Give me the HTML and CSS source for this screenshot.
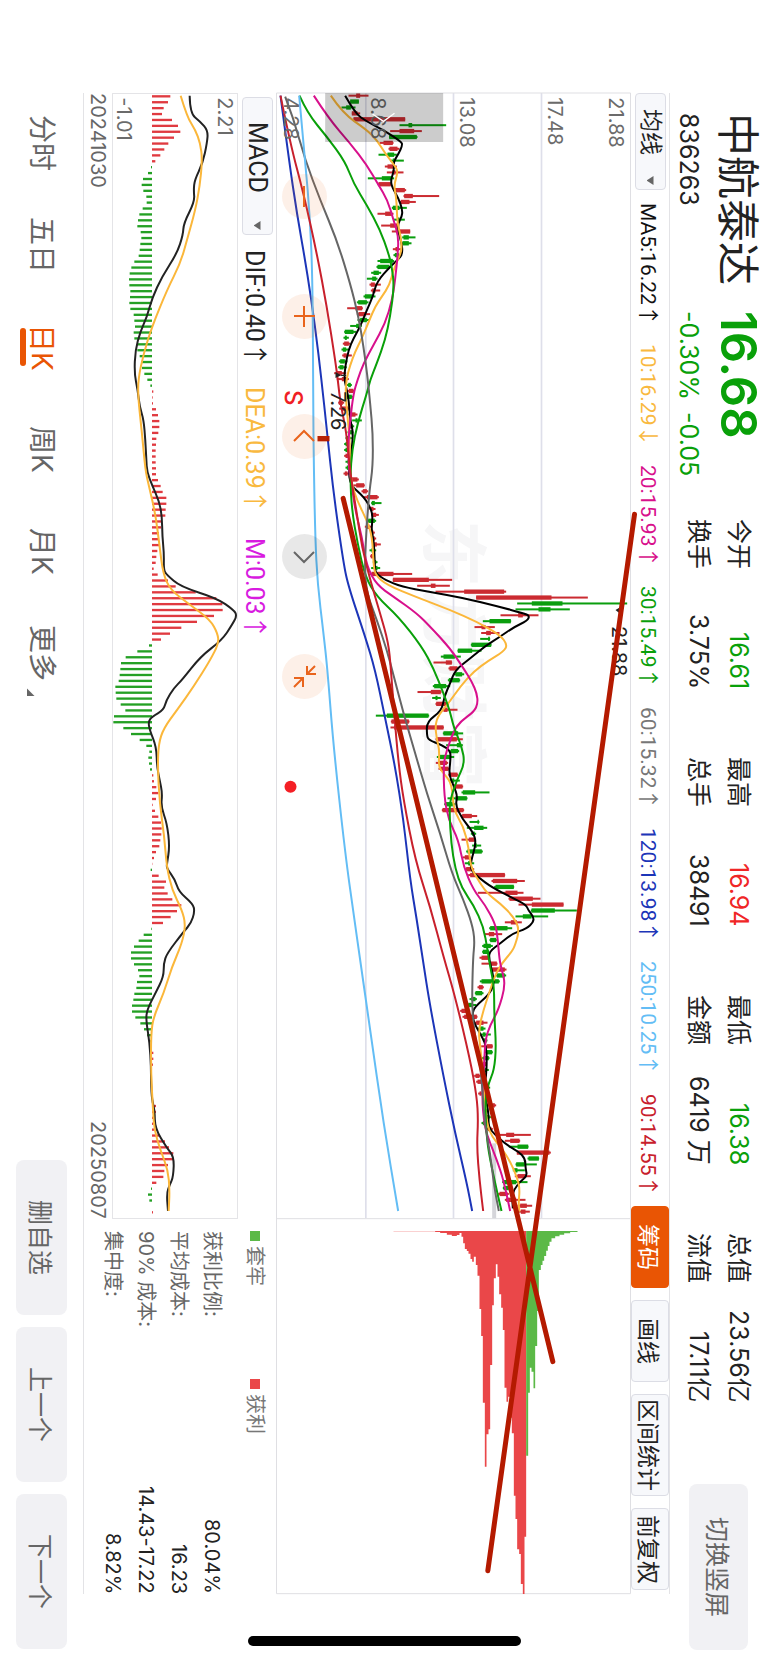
FILE: index.html
```html
<!DOCTYPE html>
<html lang="zh-CN">
<head>
  <meta charset="UTF-8">
  <meta name="viewport" content="width=device-width, initial-scale=1.0">
  <title>中航泰达 836263</title>
  <link rel="stylesheet" href="styles.css">
</head>
<body>
  <header class="top">
    <div class="ident">
      <h1>中航泰达</h1>
      <strong class="price down">16.68</strong>
      <span class="code">836263</span>
      <span class="change down"><span>-0.30%</span><span>-0.05</span></span>
    </div>
    <dl class="stats">
      <div><dt>今开</dt><dd class="down">16.61</dd></div>
      <div><dt>最高</dt><dd class="up">16.94</dd></div>
      <div><dt>最低</dt><dd class="down">16.38</dd></div>
      <div><dt>总值</dt><dd>23.56亿</dd></div>
      <div><dt>换手</dt><dd>3.75%</dd></div>
      <div><dt>总手</dt><dd>38491</dd></div>
      <div><dt>金额</dt><dd>6419 万</dd></div>
      <div><dt>流值</dt><dd>17.11亿</dd></div>
    </dl>
    <button class="btn rotate">切换竖屏</button>
  </header>

  <main>
    <div class="toolbar">
      <div class="pick pick-ma">
        <select aria-label="主图指标"><option>均线</option></select>
      </div>
      <div class="ma-list">
        <span class="ma5">MA5:16.22↑</span>
        <span class="ma10">10:16.29↓</span>
        <span class="ma20">20:15.93↑</span>
        <span class="ma30">30:15.49↑</span>
        <span class="ma60">60:15.32↑</span>
        <span class="ma120">120:13.98↑</span>
        <span class="ma250">250:10.25↑</span>
        <span class="ma90">90:14.55↑</span>
      </div>
      <div class="tools">
        <button class="tool active">筹码</button>
        <button class="tool">画线</button>
        <button class="tool wide">区间统计</button>
        <button class="tool">前复权</button>
      </div>
    </div>

    <div class="kline">
      <svg id="kline" viewBox="18 39 1064 4503">
        <text class="watermark" transform="translate(475 1320) rotate(90)">东方财富</text>
        <path class="grid" d="M287 39V3415M550 39V3415M814 39V3415"/>
        <path class="frame" d="M19 39H1081V4541H19ZM19 3416H1081"/>
        <rect x="666" y="3190" width="12" height="225" fill="#d5d5da"/>
        <g id="candles"></g>
        <g id="maLines"></g>
        <g id="chips"></g>
        <g class="axis">
          <text transform="translate(1016 52) rotate(90)">21.88</text>
          <text transform="translate(834 52) rotate(90)">17.48</text>
          <text transform="translate(568 52) rotate(90)">13.08</text>
          <text transform="translate(303 52) rotate(90)">8.68</text>
          <text transform="translate(41 52) rotate(90)">4.28</text>
        </g>
        <rect x="165" y="39" width="354" height="147" fill="#000" opacity=".2"/>
        <path d="M307 102L340 124L373 100" fill="none" stroke="#fff" stroke-width="4"/>
        <g class="mark">
          <path d="M196 876L213 886L196 894Z M213 884H228V888H213Z"/>
          <text transform="translate(181 934) rotate(90)">7.26</text>
          <path d="M1036 1590L1050 1582L1046 1598Z"/>
          <text transform="translate(1024 1638) rotate(90)">21.88</text>
        </g>
        <text class="sell" transform="translate(43 930) rotate(90)">S</text>
        <circle cx="61" cy="2120" r="18" fill="#f41f25"/>
        <rect x="142" y="1068" width="36" height="16" fill="#b41a00"/>
        <path class="trend" d="M1093 1303L653 4472M219 1255L848 3845"/>
      </svg>
      <div class="float-btns">
        <button class="round" aria-label="缩小"><svg viewBox="0 0 45 45"><path d="M22 12V33"/></svg></button>
        <button class="round" aria-label="放大"><svg viewBox="0 0 45 45"><path d="M22 12V33M12 22H33"/></svg></button>
        <button class="round" aria-label="左移"><svg viewBox="0 0 45 45"><path d="M12 27L22 17L32 27"/></svg></button>
        <button class="round off" aria-label="右移"><svg viewBox="0 0 45 45"><path d="M12 18L22 28L32 18"/></svg></button>
        <button class="round" aria-label="收起"><svg viewBox="0 0 45 45"><path d="M33 12L25 20M25 12V20H34M12 33L21 24M12 24H21V33"/></svg></button>
      </div>
    </div>

    <div class="lower">
      <section class="macd">
        <div class="macd-head">
          <div class="pick pick-macd">
            <select aria-label="副图指标"><option>MACD</option></select>
          </div>
          <span class="dif">DIF:0.40↑</span>
          <span class="dea">DEA:0.39↑</span>
          <span class="m">M:0.03↑</span>
        </div>
        <svg id="macd" viewBox="335 39 378 3378">
          <path class="frame" d="M336 40H712V3416H336Z"/>
          <g id="macdBars"></g>
          <g id="macdLines"></g>
          <g class="axis">
            <text transform="translate(653 52) rotate(90)">2.21</text>
            <text transform="translate(350 52) rotate(90)">-1.01</text>
          </g>
        </svg>
        <div class="dates"><span>20241030</span><span>20250807</span></div>
      </section>
      <section class="chip-info">
        <div class="legend">
          <span class="green">套牢</span>
          <span class="red">获利</span>
        </div>
        <dl>
          <div><dt>获利比例:</dt><dd>80.04%</dd></div>
          <div><dt>平均成本:</dt><dd>16.23</dd></div>
          <div><dt>90% 成本:</dt><dd>14.43-17.22</dd></div>
          <div><dt>集中度:</dt><dd>8.82%</dd></div>
        </dl>
      </section>
    </div>
  </main>

  <footer>
    <nav>
      <a href="#">分时</a>
      <a href="#">五日</a>
      <a href="#" class="on">日K</a>
      <a href="#">周K</a>
      <a href="#">月K</a>
      <a href="#" class="more">更多</a>
    </nav>
    <div class="actions">
      <button class="btn">删自选</button>
      <button class="btn">上一个</button>
      <button class="btn">下一个</button>
    </div>
  </footer>
  <div class="home-bar"></div>

  <script src="chart.js"></script>
</body>
</html>
```
FILE: styles.css
```css
* {
  box-sizing: border-box;
}

/* landscape screen: lines run top to bottom, rows stack right to left */
html {
  writing-mode: vertical-rl;
  text-orientation: sideways;
  height: 100%;
}

body {
  margin: 0;
  height: 100%;
  min-width: 100vw;
  display: flex;
  flex-direction: column;
  position: relative;
  background: #fff;
  color: #222;
  font-family: Inter, "Noto Sans CJK SC", sans-serif;
  font-size: 20px;
}

h1, dl, dd {
  margin: 0;
}

button, select {
  writing-mode: vertical-rl;
  text-orientation: sideways;
  font-family: inherit;
  padding: 0;
  margin: 0;
  cursor: pointer;
}

a {
  color: inherit;
  text-decoration: none;
}

.up { color: #f02626; }
.down { color: #09a009; }

.btn {
  border: none;
  border-radius: 8px;
  background: #f1f1f4;
  color: #666;
  font-size: 25px;
}

/* header */
.top {
  display: flex;
  align-items: flex-start;
  block-size: 98px;
  padding-inline: 113px 13px;
  white-space: nowrap;
}

.ident {
  display: grid;
  grid-template-columns: 172px auto;
  column-gap: 26px;
  row-gap: 13px;
  inline-size: 406px;
  flex: none;
  justify-content: start;
  padding-block-start: 9px;
  font-size: 25px;
  line-height: 30px;
}

.ident h1 {
  font-size: 43px;
  font-weight: 400;
  line-height: 42px;
}

.price {
  font-size: 49px;
  font-weight: 600;
  line-height: 42px;
}

.change {
  display: flex;
  gap: 12px;
}

.stats {
  display: grid;
  grid-template-columns: repeat(4, 170px);
  column-gap: 68px;
  padding-block-start: 9px;
  font-size: 25px;
  line-height: 40px;
}

.stats div {
  display: flex;
  justify-content: space-between;
}

.rotate {
  inline-size: 166px;
  block-size: 59px;
  margin-inline-start: auto;
  margin-block-start: 20px;
}

main {
  margin-inline: 93px 69px;
  border-block-end: 1px solid #e3e3e6;
}

/* indicator bar */
.toolbar {
  display: flex;
  align-items: center;
  block-size: 39px;
  border-block-start: 1px solid #e3e3e6;
}

.pick {
  position: relative;
  flex: none;
  block-size: 31px;
}

.pick::after {
  content: "";
  position: absolute;
  inset-inline-end: 5px;
  inset-block-start: 12px;
  inline-size: 9px;
  block-size: 7px;
  background: #666;
  clip-path: polygon(100% 0, 100% 100%, 0 50%);
  pointer-events: none;
}

.pick select {
  appearance: none;
  inline-size: 100%;
  block-size: 100%;
  border: 1px solid #dcdde5;
  border-radius: 4px;
  background: #f7f8fb;
  color: #222;
  font-size: 23px;
  line-height: 29px;
}

.pick-ma {
  inline-size: 97px;
}

.pick-ma select {
  padding-inline-start: 15px;
}

.pick-macd {
  inline-size: 138px;
}

.pick-macd select {
  font-family: Roboto, sans-serif;
  font-size: 25px;
  padding-inline-start: 24px;
}

.ma-list {
  flex: 1;
  display: flex;
  justify-content: space-between;
  padding-inline: 13px 10px;
  font-family: Roboto, "Noto Sans CJK SC", sans-serif;
  font-size: 21px;
  white-space: nowrap;
}

.ma5 { color: #111; }
.ma10 { color: #f9b93f; }
.ma20 { color: #d8108c; }
.ma30 { color: #0ba00b; }
.ma60 { color: #777; }
.ma120 { color: #1c35b8; }
.ma250 { color: #63bdf5; }
.ma90 { color: #c8202c; }

.tools {
  display: flex;
  gap: 12px;
  block-size: 38px;
  padding-inline-end: 4px;
}

.tool {
  inline-size: 82px;
  border: 1px solid #dcdde5;
  border-radius: 4px;
  background: #f7f8fb;
  color: #222;
  font-size: 23px;
  white-space: nowrap;
}

.tool.wide {
  inline-size: 102px;
}

.tool.active {
  border-color: #e95504;
  background: #e95504;
  color: #fff;
}

/* main chart */
.kline {
  position: relative;
}

svg {
  display: block;
  writing-mode: horizontal-tb;
  text-orientation: mixed;
}

#kline {
  width: 355px;
  height: 100%;
  overflow: visible;
}

.frame {
  fill: none;
  stroke: #dfdfe3;
  stroke-width: 3;
}

.grid {
  fill: none;
  stroke: #dedfea;
  stroke-width: 5;
}

.axis text {
  font-size: 60px;
  fill: #6b6b6b;
}

.watermark {
  font-size: 201px;
  font-weight: 700;
  fill: #f6f6f7;
}

.mark {
  fill: #222;
  font-size: 60px;
}

.sell {
  fill: #f01f25;
  font-size: 72px;
  font-weight: 500;
}

.trend {
  fill: none;
  stroke: #b41a00;
  stroke-width: 15;
  stroke-linecap: round;
}

.line {
  fill: none;
  stroke-width: 6;
  stroke-linejoin: round;
}

.float-btns {
  position: absolute;
  inset-inline-start: 81px;
  inset-block-end: 6px;
  display: flex;
  gap: 75px;
}

.round {
  inline-size: 45px;
  block-size: 45px;
  border: none;
  border-radius: 50%;
  background: rgba(240, 110, 30, 0.1);
}

.round svg {
  width: 45px;
  height: 45px;
  fill: none;
  stroke: #e9641c;
  stroke-width: 2;
}

.round.off {
  background: rgba(0, 0, 0, 0.09);
}

.round.off svg {
  stroke: #666;
}

/* macd and chip figures */
.lower {
  display: flex;
}

.macd {
  flex: 3;
}

.macd-head {
  display: flex;
  align-items: center;
  block-size: 38px;
  padding-inline-start: 4px;
  font-family: Roboto, "Noto Sans CJK SC", sans-serif;
  font-size: 25px;
  white-space: nowrap;
}

.macd-head .dif {
  margin-inline-start: 15px;
}

.macd-head .dea {
  margin-inline-start: 20px;
}

.macd-head .m {
  margin-inline-start: 24px;
}

.dif { color: #222; }
.dea { color: #f9b93f; }
.m { color: #d81be0; }

#macd {
  width: 126px;
  height: 100%;
}

.dates {
  display: flex;
  justify-content: space-between;
  line-height: 28px;
  color: #666;
}

.chip-info {
  flex: 1;
  padding-inline-start: 12px;
  padding-block-start: 2px;
}

.legend {
  display: flex;
  block-size: 46px;
  line-height: 38px;
  color: #777;
}

.legend span {
  display: flex;
  align-items: center;
  block-size: 38px;
  gap: 5px;
  inline-size: 148px;
}

.legend span::before {
  content: "";
  inline-size: 10px;
  block-size: 10px;
  background: #5bb947;
}

.legend .red::before {
  background: #ea4749;
}

.chip-info dl div {
  display: flex;
  justify-content: space-between;
  line-height: 33px;
}

.chip-info dt {
  color: #666;
}

/* period tabs */
footer {
  flex: 1;
  display: flex;
  justify-content: space-between;
  align-items: center;
  padding-inline: 92px 14px;
}

nav {
  display: flex;
  font-size: 28px;
  line-height: 34px;
  color: #666;
}

nav a {
  position: relative;
  inline-size: 102px;
  text-align: center;
}

nav .on {
  color: #e95504;
}

nav .on::after {
  content: "";
  position: absolute;
  inset-inline: 32px;
  inset-block-end: -5px;
  block-size: 6px;
  border-radius: 3px;
  background: #e95504;
}

nav .more::after {
  content: "";
  position: absolute;
  inset-inline-end: 8px;
  inset-block-end: 2px;
  inline-size: 8px;
  block-size: 8px;
  background: #666;
  clip-path: polygon(0 0, 0 100%, 100% 100%);
}

.actions {
  display: flex;
  gap: 12px;
}

.actions .btn {
  inline-size: 155px;
  block-size: 51px;
}

.home-bar {
  position: absolute;
  bottom: 17px;
  left: 50%;
  width: 273px;
  height: 10px;
  margin-left: -136px;
  border-radius: 5px;
  background: #000;
}
```
FILE: chart.js
```javascript
// Chart units: 3 per pixel. Time runs down, value runs to the right.
const STEP = 17.714;
const NS = "http://www.w3.org/2000/svg";

// low high bodyStart bodyEnd colour
const candles = `235 295 258 270 r|240 266 240 266 g|214 256 228 242 g|245 270 245 262 r|250 405 250 405 r
388 528 415 426 g|360 455 388 432 r|357 442 357 440 g|328 370 340 368 r|355 388 358 382 r
325 380 352 372 g|360 401 368 374 g|344 380 352 372 r|350 400 366 376 r|293 372 335 365 g
322 365 325 362 r|370 408 374 404 r|400 507 402 428 r|388 437 392 418 r|365 410 368 388 g
322 370 345 366 r|370 404 382 388 g|333 385 360 384 r|365 420 382 420 r|396 436 400 416 g
394 424 397 416 g|368 392 376 384 r|370 392 374 386 g|322 372 330 368 g|319 362 322 358 g
303 333 310 326 g|290 322 306 318 g|298 332 302 314 r|302 330 306 316 r|280 316 284 306 g
260 295 264 290 g|231 278 256 276 r|260 300 265 286 r|262 298 270 290 g|240 275 258 268 g
222 258 224 250 g|220 236 224 230 g|218 240 222 236 r|214 236 218 228 g|216 245 220 230 r
206 232 210 224 g|204 230 208 220 g|192 228 200 215 r|200 236 215 230 r|230 245 234 242 g
232 254 236 250 r|226 250 230 245 g|204 222 206 218 r|207 240 215 235 r|235 262 240 256 r
246 275 256 262 g|236 252 238 248 g|232 250 238 246 g|226 245 230 240 g|222 240 226 234 g
222 236 226 234 g|222 240 226 236 r|226 244 232 240 g|226 238 230 236 g|220 236 224 232 r
238 266 242 262 r|250 284 258 282 r|274 294 278 290 r|280 326 290 322 r|303 334 305 314 g
298 316 302 310 r|304 326 308 318 r|290 318 294 314 g|284 304 288 298 r|300 314 302 310 r
304 318 306 314 r|308 332 312 320 r|298 318 304 312 g|300 314 302 308 r|308 322 312 318 g
303 330 314 322 g|300 426 304 370 r|368 546 368 476 r|441 539 482 496 r|496 708 582 702 r
618 953 618 844 r|741 1071 785 877 g|736 899 805 841 g|691 805 744 758 r|638 723 658 722 g
613 674 634 646 r|633 688 648 662 r|630 660 654 659 g|602 664 604 663 g|562 634 563 606 g
512 572 520 554 g|490 546 527 545 r|535 566 538 562 r|550 582 556 576 g|533 570 536 568 g
488 540 492 528 g|442 514 482 512 r|486 512 496 502 g|496 536 498 530 r|516 562 520 532 r
317 477 350 475 g|362 418 364 416 r|361 521 372 520 r|518 579 520 564 g|496 578 498 560 r
528 578 560 572 g|540 567 542 564 g|500 552 508 542 g|497 534 506 530 r|505 540 510 535 r
534 564 536 562 r|536 569 546 552 g|548 579 552 577 r|574 658 578 615 g|532 592 556 590 g
522 556 526 548 g|515 582 517 580 r|572 621 576 605 r|598 628 622 626 g|590 651 612 640 g
602 618 606 614 g|574 616 596 614 r|606 633 612 620 g|588 638 592 635 g|578 602 584 598 r
584 612 594 602 g|586 612 588 608 r|594 705 600 704 r|664 764 668 741 r|672 732 676 731 g
623 760 706 742 r|715 811 718 788 r|745 880 785 880 r|782 920 784 854 g|736 834 758 784 g
704 755 722 740 r|657 726 660 712 g|642 696 656 672 r|658 680 660 678 g|636 668 640 662 g
636 658 638 656 g|628 656 634 654 r|634 682 662 680 r|663 709 666 704 r|676 708 680 704 g
629 689 634 686 g|622 641 626 638 r|614 640 616 636 g|598 620 604 616 g|590 618 594 606 g
570 600 574 588 r|577 622 582 620 r|614 652 618 640 r|622 646 630 640 g|632 662 638 646 g
638 652 642 650 g|633 668 650 667 r|644 668 650 666 g|632 658 640 656 g|630 650 634 648 r
640 656 644 650 g|612 632 616 628 r|618 640 622 634 r|640 660 644 654 g|624 638 628 634 r
640 658 644 652 g|648 678 666 674 r|640 652 644 650 g|644 662 648 658 g|634 652 638 648 g
648 668 652 664 r|684 782 708 732 r|704 750 720 748 r|716 775 742 774 g|740 842 740 838 r
772 807 775 806 g|736 800 738 764 g|728 764 732 742 g|734 782 742 766 r|696 772 700 738 g
698 720 700 716 g|684 716 688 712 r|704 766 708 738 r|742 786 750 770 r|744 779 752 766 r`.split(/[|\n]/);

const maLines = {
  "#000": "225,47 255,100 290,125 340,150 393,185 397,195 385,222 370,245 372,270 362,300 365,320 385,355 397,390 395,410 383,432 385,460 395,490 397,520 388,535 360,560 320,605 308,650 290,690 270,740 250,775 235,810 225,860 222,900 235,950 240,1020 248,1050 247,1090 238,1150 236,1190 245,1218 258,1230 282,1253 296,1275 307,1300 306,1330 304,1350 312,1390 314,1470 320,1482 345,1500 395,1520 475,1535 585,1555 680,1578 760,1600 778,1607 772,1622 730,1642 690,1670 645,1698 600,1735 555,1770 540,1810 522,1850 515,1892 470,1925 470,1965 475,1980 515,1995 541,2012 541,2040 536,2085 552,2120 562,2150 556,2175 575,2215 610,2258 618,2290 602,2345 602,2370 625,2392 665,2422 730,2455 768,2475 774,2490 790,2510 790,2526 770,2545 725,2562 690,2590 657,2615 657,2640 668,2680 672,2715 655,2745 615,2780 606,2800 612,2830 638,2875 648,2900 650,2940 648,2990 640,3030 650,3070 655,3100 655,3140 670,3160 710,3195 745,3215 765,3235 766,3265 771,3288 750,3305 732,3328 726,3350 728,3385",
  "#fbb73a": "182,47 218,100 290,150 320,180 345,220 372,255 384,275 371,315 378,350 380,390 382,430 392,470 395,510 385,535 370,570 358,615 335,650 315,680 300,715 275,775 255,815 240,855 228,900 226,950 240,1090 238,1150 244,1210 262,1265 290,1320 306,1370 310,1450 315,1485 350,1515 440,1552 540,1590 620,1625 690,1665 712,1695 700,1715 655,1742 610,1775 570,1820 535,1870 505,1905 495,1935 500,1980 508,2010 505,2060 520,2080 545,2110 550,2190 580,2240 595,2300 602,2360 618,2390 650,2440 690,2470 730,2510 748,2548 735,2595 725,2615 695,2650 675,2685 655,2745 640,2790 625,2850 630,2900 640,2990 643,3050 650,3130 665,3170 695,3205 720,3245 740,3290 749,3325 745,3370 748,3395",
  "#d8108c": "131,47 175,115 240,190 290,255 325,315 352,360 370,420 385,470 383,520 375,600 366,660 345,730 310,795 280,850 262,900 250,940 240,1020 234,1090 236,1170 245,1215 255,1290 275,1370 290,1460 320,1515 370,1550 440,1600 480,1640 540,1705 580,1765 605,1805 620,1840 623,1870 612,1895 570,1925 550,1955 530,2010 520,2050 522,2150 535,2220 565,2280 580,2360 610,2430 645,2475 675,2530 682,2570 688,2640 695,2670 706,2715 685,2790 660,2835 645,2880 642,2960 635,3050 643,3140 660,3190 680,3240 700,3300 720,3393",
  "#09a009": "88,47 112,100 170,170 225,245 250,310 290,375 330,450 355,520 365,560 372,620 360,710 345,780 320,850 300,900 290,940 262,1030 246,1110 240,1190 245,1290 262,1390 285,1490 320,1550 385,1610 455,1700 490,1765 520,1840 540,1895 550,1940 575,2000 584,2050 560,2100 540,2160 538,2200 543,2290 555,2365 575,2425 610,2475 640,2540 652,2610 660,2660 672,2720 672,2800 678,2900 672,2970 655,3010 645,3060 648,3150 655,3215 675,3310 694,3393",
  "#666": "45,50 70,115 105,240 150,360 200,480 240,610 265,710 280,800 292,890 300,970 308,1060 308,1160 298,1230 290,1330 283,1460 290,1540 320,1620 350,1710 370,1785 400,1900 435,2020 470,2140 510,2260 545,2380 580,2460 605,2530 614,2580 608,2640 605,2800 620,2900 632,2970 638,3050 645,3140 660,3220 672,3320 686,3393",
  "#1c35b8": "31,47 55,230 80,400 110,570 135,740 154,900 170,1050 190,1240 220,1450 235,1520 285,1670 315,1770 345,1915 375,2060 400,2220 420,2400 440,2520 458,2640 480,2780 520,2990 555,3160 590,3310 606,3393",
  "#63bdf5": "87,47 105,240 120,420 127,600 129,900 130,1100 135,1370 142,1510 160,1660 172,1770 190,2000 225,2320 250,2500 270,2640 300,2850 340,3130 384,3393",
  "#c8202c": "31,47 60,190 100,340 140,520 170,680 195,840 203,900 212,980 228,1050 240,1180 260,1300 275,1400 300,1500 330,1600 355,1690 362,1765 372,1900 385,2050 400,2160 435,2340 480,2480 520,2630 555,2750 600,2940 620,3050 624,3120 620,3200 628,3300 639,3393"
};

// cost distribution: start of each price step, length of its bar
const chipBase = 3453;
const chipsRed = [[370,1],[495,3],[510,6],[530,11],[545,15],[560,12],[568,6],[574,17],[579,37],[584,54],[590,60],[595,68],[601,84],[606,92],[611,77],[617,102],[622,134],[628,234],[633,315],[638,515],[644,707],[649,610],[655,595],[660,402],[666,223],[671,142],[677,100],[682,137],[687,190],[693,230],[698,297],[703,470],[709,512],[714,497],[720,560],[725,607],[731,794],[736,864],[741,955],[747,969],[752,1059],[758,1089],[763,917],[768,0]];
const chipsGreen = [[768,674],[774,485],[779,410],[784,422],[790,472],[795,345],[801,240],[806,117],[812,102],[817,89],[822,75],[828,59],[833,45],[838,32],[844,22],[855,16],[868,11],[882,7],[900,3],[922,0]];

const macdBars = [
  510,503,490,485,515,533,540,521,504,492,480,465,452,443,428,424,429,438,439,427,
  417,413,411,421,423,420,418,415,402,393,388,386,387,390,389,387,390,400,402,404,
  400,402,410,411,418,422,425,432,441,450,459,457,458,467,473,477,477,474,468,467,
  466,466,466,467,467,473,481,487,498,498,496,495,483,482,476,476,476,471,468,466,
  460,472,503,526,586,648,666,667,641,590,543,509,482,446,411,376,362,360,358,355,
  345,346,348,361,375,341,339,369,392,418,438,447,444,446,449,459,461,468,474,467,
  457,464,474,482,484,483,480,477,467,461,456,451,475,497,492,502,516,543,530,511,
  488,453,430,415,401,392,392,401,413,417,410,408,402,399,395,395,405,420,431,440,
  450,455,459,459,458,455,455,455,455,455,458,467,467,462,459,461,476,494,506,519,
  520,503,492,489,468,452,443,447,455,458
];

const macdLines = {
  "#222": "568,47 569,100 600,125 623,152 620,190 607,250 583,300 580,330 583,365 550,430 548,465 530,520 485,590 455,655 440,710 420,755 405,810 402,880 412,930 418,980 430,1020 435,1080 438,1140 440,1175 455,1215 477,1265 485,1310 486,1370 491,1420 490,1470 500,1485 540,1520 650,1555 700,1590 710,1607 695,1635 665,1680 600,1730 545,1800 520,1825 498,1860 490,1890 455,1910 444,1925 448,1950 468,2000 470,2060 478,2100 486,2140 482,2180 500,2230 508,2300 500,2350 499,2365 525,2400 535,2435 578,2472 583,2495 572,2530 550,2555 500,2620 490,2650 490,2690 465,2740 440,2790 437,2820 448,2890 452,2960 452,3010 455,3060 463,3090 464,3145 500,3205 521,3230 519,3290 508,3315 499,3340 503,3393",
  "#fbb73a": "541,47 560,110 585,150 600,190 606,240 598,320 585,390 560,480 540,550 500,630 455,740 430,820 413,900 414,960 425,1060 435,1170 445,1215 465,1300 478,1400 488,1480 510,1530 570,1575 630,1620 652,1660 655,1690 630,1740 580,1820 530,1890 490,1945 475,1990 472,2060 478,2170 492,2270 499,2360 515,2430 545,2490 556,2535 545,2590 515,2660 490,2740 460,2810 452,2860 452,2980 458,3090 462,3150 480,3210 503,3270 508,3330 505,3393"
};

function add(parent, tag, attrs) {
  const el = document.createElementNS(NS, tag);
  for (const key in attrs) el.setAttribute(key, attrs[key]);
  document.getElementById(parent).appendChild(el);
}

function bar(parent, x1, x2, y, thickness, fill) {
  add(parent, "rect", { x: Math.min(x1, x2), y: y - thickness / 2, width: Math.abs(x2 - x1), height: thickness, fill });
}

// quadratic through the midpoints keeps the averages smooth
function smooth(text) {
  const p = text.split(" ").map(s => s.split(",").map(Number));
  let d = `M${p[0]}`;
  for (let i = 1; i < p.length - 1; i++) {
    const mid = [(p[i][0] + p[i + 1][0]) / 2, (p[i][1] + p[i + 1][1]) / 2];
    d += `Q${p[i]} ${mid}`;
  }
  return d + `L${p[p.length - 1]}`;
}

function drawLines(parent, lines) {
  for (const colour in lines) {
    add(parent, "path", { d: smooth(lines[colour]), stroke: colour, class: "line" });
  }
}

function drawChips(steps, fill) {
  let d = `M${steps[0][0]} ${chipBase}`;
  steps.forEach(([x, len], i) => {
    const next = steps[i + 1] ? steps[i + 1][0] : x;
    d += `V${chipBase + len}H${next}`;
  });
  add("chips", "path", { d: d + `V${chipBase}Z`, fill });
}

candles.forEach((row, i) => {
  const [lo, hi, a, b, c] = row.split(" ");
  const y = 47 + i * STEP;
  const fill = c === "r" ? "#cb2b31" : "#0a9e0e";
  bar("candles", +lo, +hi, y, 6, fill);
  bar("candles", +a, +b, y, 13, fill);
});
drawLines("maLines", maLines);
drawChips(chipsRed, "#ea4749");
drawChips(chipsGreen, "#5bb947");

macdBars.forEach((x, i) => bar("macdBars", 455, x, 49 + i * STEP, 7, x > 455 ? "#e03a40" : "#24a024"));
drawLines("macdLines", macdLines);
```
